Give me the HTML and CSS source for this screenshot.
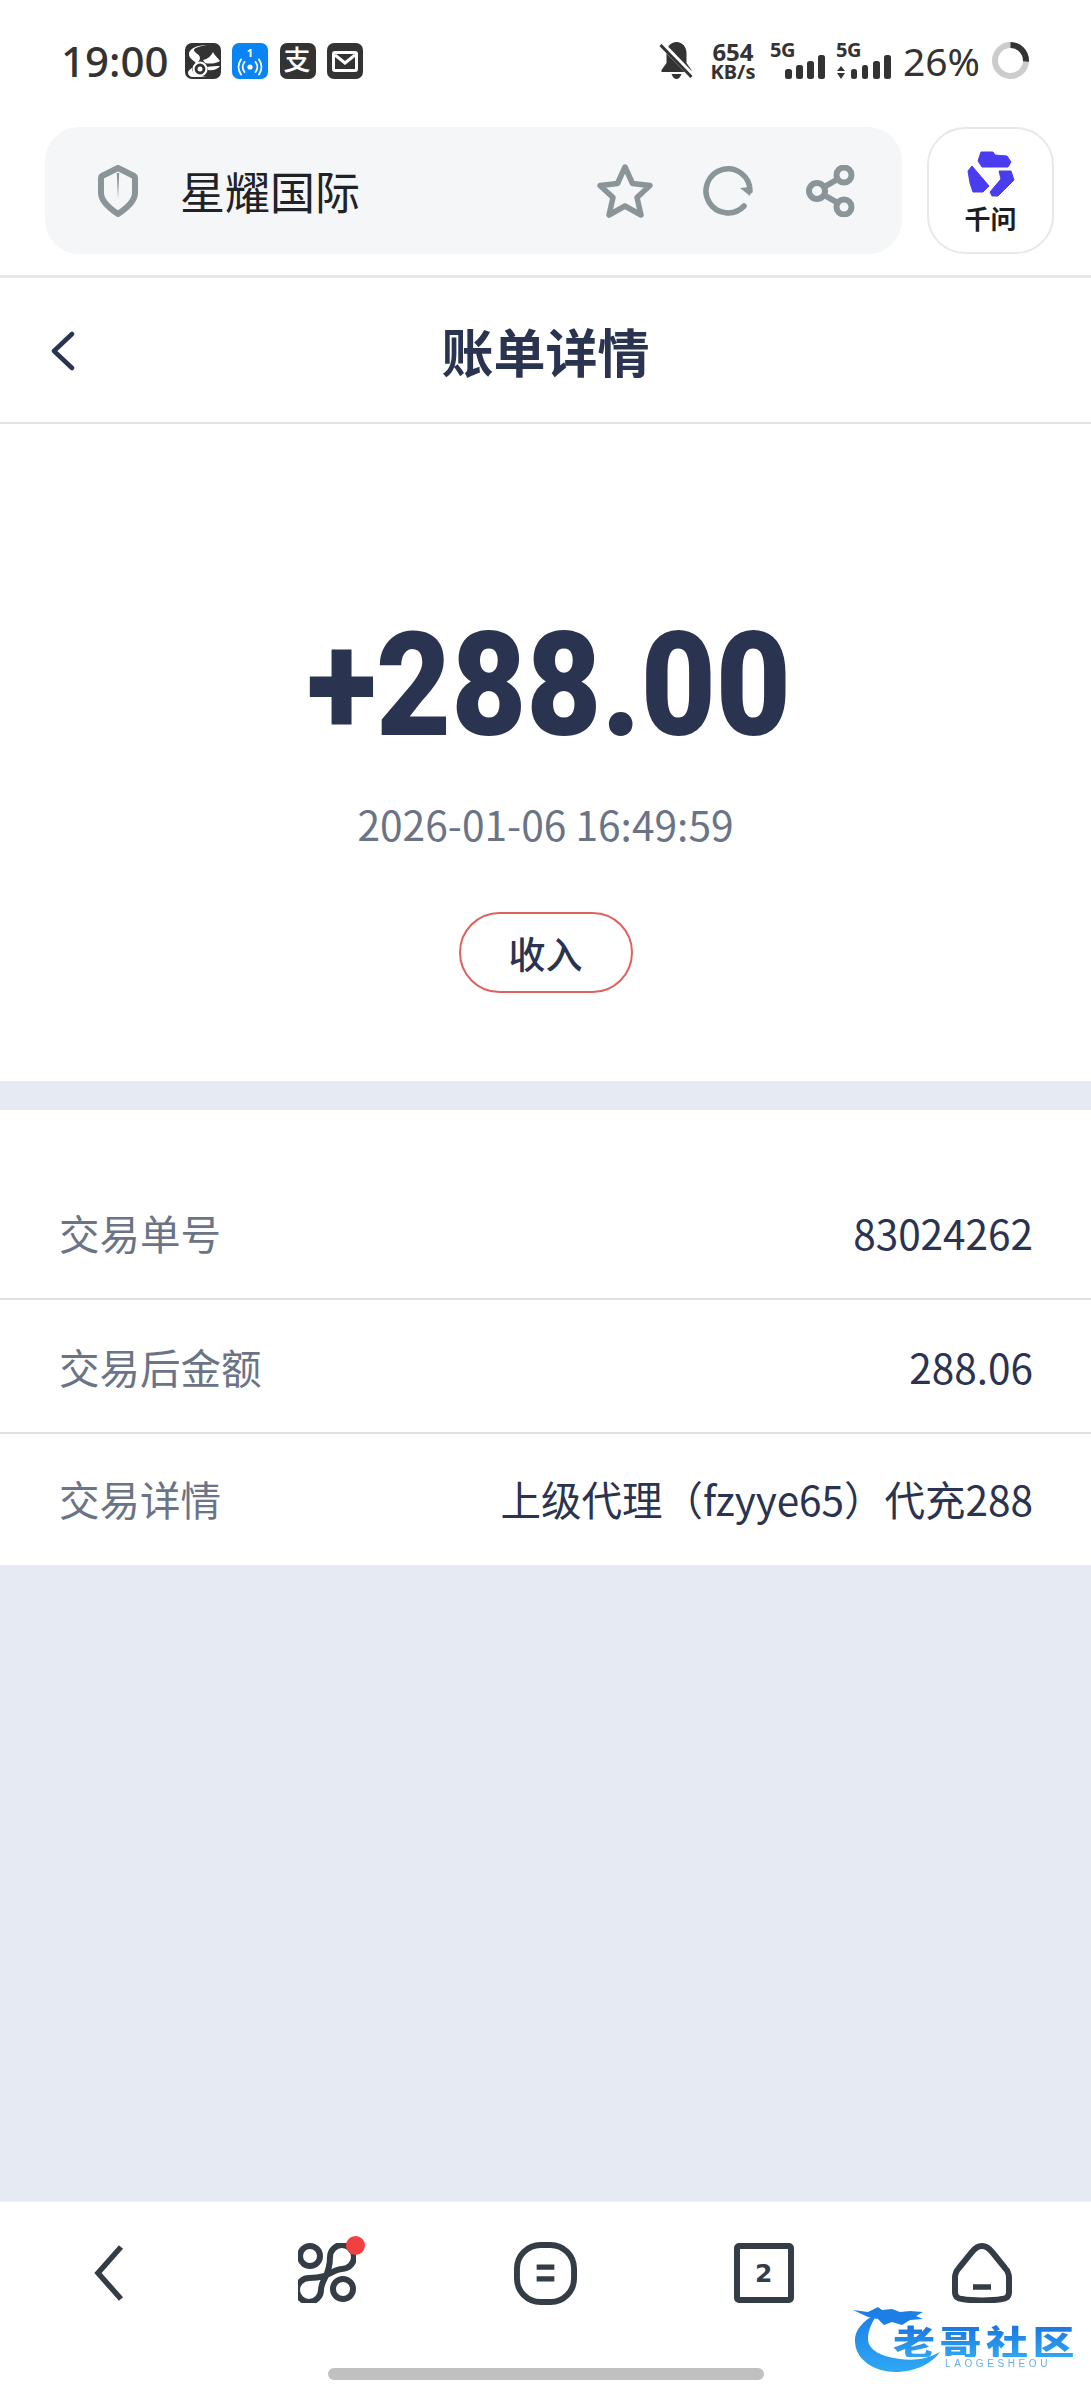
FILE: index.html
```html
<!DOCTYPE html>
<html lang="zh-CN">
<head>
<meta charset="utf-8">
<title>账单详情</title>
<link rel="stylesheet" href="styles.css">
</head>
<body>
<div class="screen">

  <header class="status">
    <div class="status-left">
      <span class="clock">19:00</span>
      <div class="notify-icons">
        <!-- UC browser squirrel -->
        <svg class="notify" viewBox="0 0 36 36"><rect width="36" height="36" rx="7" fill="#333"/><path d="M22 2C12 2 3 6 4 12c1 5 7 6 7 9-1 3-8 5-8 9 0 2 2 4 5 4h14C12 33 7 30 7 26c0-4 8-6 8-11 0-4-6-5-6-8 0-2 6-4 13-5z" fill="#fff"/><circle cx="15" cy="26" r="6.500" fill="none" stroke="#fff" stroke-width="2.200"/><circle cx="15" cy="26" r="2.500" fill="#fff"/><path d="M18 17c5-1 8-4 10-8 1 3 5 6 7 9-5 3-11 3-15 2z" fill="#fff"/><path d="M22 24c4-1 9-1 13-1-2 3-7 5-12 4z" fill="#fff"/></svg>
        <!-- hotspot with a count -->
        <svg class="notify" viewBox="0 0 36 36"><rect width="36" height="36" rx="7" fill="#0a84f5"/><text class="hotspot-count" x="18" y="14" text-anchor="middle">1</text><circle cx="18" cy="24" r="2.600" fill="#fff"/><path d="M12.500 19a8 8 0 0 0 0 10M23.500 19a8 8 0 0 1 0 10M9 16.500a13 13 0 0 0 0 15M27 16.500a13 13 0 0 1 0 15" fill="none" stroke="#fff" stroke-width="1.900" stroke-linecap="round"/></svg>
        <!-- Alipay mark -->
        <svg class="notify" viewBox="0 0 36 36"><rect width="36" height="36" rx="7" fill="#333"/><text class="alipay-mark" x="17" y="27" text-anchor="middle">支</text></svg>
        <!-- mail -->
        <svg class="notify" viewBox="0 0 36 36"><rect width="36" height="36" rx="7" fill="#333"/><rect x="6.500" y="9.500" width="23" height="18" rx="1.500" fill="none" stroke="#fff" stroke-width="3"/><path d="M8 12l10 8 10-8" fill="none" stroke="#fff" stroke-width="3"/></svg>
      </div>
    </div>
    <div class="status-right">
      <svg class="bell" viewBox="0 0 34 37"><path d="M17 0c6 0 10 5 10 11v10l5 7v2H2v-2l5-7V11C7 5 11 0 17 0z" fill="#333"/><path d="M12 32h10c-1 3-3 5-5 5s-4-2-5-5z" fill="#333"/><path d="M2 2l30 31" stroke="#fff" stroke-width="6"/><path d="M1 3l31 32" stroke="#333" stroke-width="3"/></svg>
      <div class="netspeed"><span class="net-value">654</span><span class="net-unit">KB/s</span></div>
      <svg class="signal" viewBox="0 0 55 37"><text class="signal-tag" x="0" y="15">5G</text><rect x="15" y="27" width="7" height="10" rx="2.500"/><rect x="26" y="23" width="7" height="14" rx="2.500"/><rect x="37" y="19" width="7" height="18" rx="2.500"/><rect x="48" y="13" width="7" height="24" rx="2.500"/></svg>
      <svg class="signal" viewBox="0 0 55 37"><text class="signal-tag" x="0" y="15">5G</text><path d="M5 24l4 5H1zM1 31h8l-4 6z"/><rect x="15" y="27" width="6" height="10" rx="2.500"/><rect x="26" y="23" width="6" height="14" rx="2.500"/><rect x="37" y="19" width="7" height="18" rx="2.500"/><rect x="48" y="13" width="7" height="24" rx="2.500"/></svg>
      <span class="battery-level">26%</span>
      <svg class="battery-ring" viewBox="0 0 37 37"><circle cx="18.500" cy="18.500" r="15.500" fill="none" stroke="#ccc" stroke-width="6"/><circle cx="18.500" cy="18.500" r="15.500" fill="none" stroke="#333" stroke-width="6" stroke-dasharray="25.300 97.400" transform="rotate(-90 18.500 18.500)"/></svg>
    </div>
  </header>

  <div class="toolbar">
    <div class="address">
      <svg class="shield" viewBox="0 0 40 52"><path d="M20 3l16 8c1 .5 1 1 1 2v15c0 8-8 15-17 21C11 43 3 36 3 28V13c0-1 0-1.500 1-2z" fill="none" stroke="#8a9499" stroke-width="6" stroke-linejoin="round"/><path d="M18.800 8h2.400L20 34z" fill="#8a9499"/></svg>
      <span class="site-name">星耀国际</span>
      <div class="address-actions">
        <svg class="star" viewBox="0 0 56 54"><path d="M28 3l7.500 16.500L53 21.500 40 33.500 44 51 28 42 12 51l4-17.500L3 21.500l17.500-2z" fill="none" stroke="#8a9499" stroke-width="5.500" stroke-linejoin="round"/></svg>
        <svg class="reload" viewBox="0 0 50 50"><path d="M47 25A22 22 0 1 0 41 40" fill="none" stroke="#8a9499" stroke-width="5.500" stroke-linecap="round"/><path d="M37 22l10 8 1-9z" fill="#8a9499"/></svg>
        <svg class="share" viewBox="0 0 49 52"><g fill="none" stroke="#8a9499" stroke-width="6"><circle cx="11" cy="26" r="8"/><circle cx="38" cy="10" r="7.500"/><circle cx="38" cy="42" r="7.500"/><path d="M18 22l14-8M18 30l14 8"/></g></svg>
      </div>
    </div>
    <div class="assistant">
      <svg class="assistant-logo" viewBox="0 0 48 47"><g fill="#4a3df0" stroke="#4a3df0" stroke-width="1" stroke-linejoin="round"><path d="M14 2h12l2 3 12 1 4 6-3 5H15l-4-6z"/><path d="M1 21l4-5 17 20-6 6H6l-3-9z"/><path d="M32 21h12l3 9-16 16h-6l-2-4 11-13z"/></g></svg>
      <span class="assistant-name">千问</span>
    </div>
  </div>

  <nav class="titlebar">
    <svg class="titlebar-back" viewBox="0 0 24 40"><path d="M21 3L3 20l18 17" fill="none" stroke="#2a3350" stroke-width="4.500" stroke-linecap="round" stroke-linejoin="round"/></svg>
    <h1 class="titlebar-title">账单详情</h1>
  </nav>

  <section class="summary">
    <div class="amount">+288.00</div>
    <div class="timestamp">2026-01-06 16:49:59</div>
    <div class="kind-pill">收入</div>
  </section>

  <section class="details">
    <div class="detail-row"><span class="detail-label">交易单号</span><span class="detail-value">83024262</span></div>
    <div class="detail-row"><span class="detail-label">交易后金额</span><span class="detail-value">288.06</span></div>
    <div class="detail-row"><span class="detail-label">交易详情</span><span class="detail-value">上级代理（fzyye65）代充288</span></div>
  </section>

  <div class="filler"></div>

  <footer class="tabbar">
    <div class="tabs">
      <svg class="tab-back" viewBox="0 0 30 58"><path d="M27 3L4 29l23 26" fill="none" stroke="#343d45" stroke-width="5.500" stroke-linejoin="miter"/></svg>
      <div class="tab-cluster">
        <svg class="cluster-icon" viewBox="0 0 58 60"><g fill="none" stroke="#343d45" stroke-width="6"><circle cx="12" cy="13" r="10"/><circle cx="45" cy="46" r="10"/><path d="M23 47C23 36 32 34 32 14A12 12 0 1 1 44 26C34 26 33 35 11 35A12 12 0 1 0 23 47Z"/></g></svg>
        <span class="cluster-dot"></span>
      </div>
      <svg class="tab-menu" viewBox="0 0 64 64"><rect x="3" y="3" width="58" height="58" rx="24" fill="none" stroke="#343d45" stroke-width="6"/><path d="M23 25.500h18M23 37.500h18" stroke="#343d45" stroke-width="5.500"/></svg>
      <div class="tab-count">2</div>
      <svg class="tab-home" viewBox="0 0 60 60"><path d="M30 3c-4 0-7 2-10 6L7 25c-3 3-4 6-4 10v14c0 5 3 7 7 7 10 2 30 2 40 0 4 0 7-2 7-7V35c0-4-1-7-4-10L40 9c-3-4-6-6-10-6z" fill="none" stroke="#343d45" stroke-width="6"/><path d="M21 44h18" stroke="#343d45" stroke-width="5.500"/></svg>
    </div>
    <div class="home-indicator"></div>
  </footer>

  <div class="watermark">
    <svg class="watermark-dragon" viewBox="0 0 110 70"><defs><linearGradient id="dragonFill" x1="0" y1="0" x2="0" y2="1"><stop offset="0" stop-color="#1c7fe6"/><stop offset="1" stop-color="#2fa8f4"/></linearGradient></defs><path d="M38 8C22 16 14 26 15 37 16 56 36 67 55 67 76 67 92 58 100 47 88 54 74 56 60 54 42 52 28 45 28 34 28 24 33 16 38 8Z" fill="url(#dragonFill)"/><path d="M13 5L28 7 38 2 42 5 52 4 60 7 70 6 83 7 76 11 83 14 70 15 62 20 52 17 44 20 38 14 28 12Z" fill="#1c7fe6"/></svg>
    <span class="watermark-name">老哥社区</span>
    <span class="watermark-latin">LAOGESHEOU</span>
  </div>
</div>
</body>
</html>
```

FILE: styles.css
```css
* { box-sizing: border-box; }

html, body { margin: 0; padding: 0; }

body {
  background: #fff;
  font-family: "Noto Sans CJK SC", "Noto Sans", sans-serif;
}

.screen {
  position: relative;
  width: 1091px;
  height: 2400px;
  display: flex;
  flex-direction: column;
  background: #e6eaf3;
  overflow: hidden;
}

/* system status bar */
.status {
  height: 127px;
  padding: 42px 62px 0 61px;
  display: flex;
  justify-content: space-between;
  align-items: flex-start;
  background: #fff;
  color: #333;
}

.status-left { display: flex; align-items: center; height: 37px; gap: 16px; }

.clock {
  font-family: "Noto Sans", sans-serif;
  font-size: 42px;
  font-weight: 500;
  line-height: 37px;
}

.notify-icons { display: flex; gap: 11.500px; }
.notify { width: 36px; height: 36px; display: block; overflow: visible; }

.hotspot-count { font: 700 11px "Noto Sans", sans-serif; fill: #fff; }
.alipay-mark { font: 500 27px "Noto Sans CJK SC", sans-serif; fill: #fff; }

.status-right { display: flex; align-items: center; height: 37px; }

.bell { width: 35px; height: 37px; display: block; }

.netspeed {
  margin-left: 17px;
  width: 44px;
  display: flex;
  flex-direction: column;
  align-items: center;
  font-family: "Noto Sans", sans-serif;
  font-weight: 700;
}

.net-value { font-size: 24px; line-height: 22px; }
.net-unit { font-size: 20px; line-height: 17px; white-space: nowrap; }

.signal { width: 55px; height: 37px; display: block; margin-left: 15px; fill: #333; overflow: visible; }
.signal + .signal { margin-left: 11px; }
.signal-tag { font: 700 20px "Noto Sans", sans-serif; letter-spacing: -0.5px; }

.battery-level {
  margin-left: 12px;
  font-family: "Noto Sans", sans-serif;
  font-size: 39px;
  line-height: 37px;
  white-space: nowrap;
}

.battery-ring { width: 37px; height: 37px; display: block; margin-left: 12px; }

/* browser address row */
.toolbar {
  height: 151px;
  padding: 0 37px 0 45px;
  display: flex;
  gap: 25px;
  align-items: flex-start;
  background: #fff;
  border-bottom: 3px solid #e8e8e8;
}

.address {
  flex: 1;
  height: 127px;
  padding: 0 47px 0 53px;
  display: flex;
  align-items: center;
  background: #f4f6f8;
  border-radius: 34px;
}

.shield { width: 40px; height: 52px; display: block; }

.site-name {
  margin-left: 42px;
  font-size: 45px;
  line-height: 60px;
  color: #1f2328;
}

.address-actions { margin-left: auto; display: flex; align-items: center; }
.star { width: 56px; height: 54px; display: block; }
.reload { width: 50px; height: 50px; display: block; margin-left: 50px; }
.share { width: 49px; height: 52px; display: block; margin-left: 53px; }

.assistant {
  width: 127px;
  height: 127px;
  border: 2px solid #e8e8e8;
  border-radius: 38px;
  display: flex;
  flex-direction: column;
  align-items: center;
  padding-top: 21px;
}

.assistant-logo { width: 48px; height: 47px; display: block; }

.assistant-name {
  margin-top: 5px;
  font-size: 26px;
  line-height: 32px;
  font-weight: 700;
  color: #1d1d1f;
}

/* page title */
.titlebar {
  position: relative;
  height: 146px;
  padding-top: 2px;
  display: flex;
  align-items: center;
  justify-content: center;
  background: #fff;
  border-bottom: 2px solid #e2e2e2;
}

.titlebar-back { position: absolute; left: 51px; top: 53px; width: 24px; height: 40px; }

.titlebar-title {
  margin: 0;
  font-size: 52px;
  line-height: 70px;
  font-weight: 700;
  color: #2a3350;
}

/* amount block */
.summary {
  height: 657px;
  padding-top: 190px;
  display: flex;
  flex-direction: column;
  align-items: center;
  background: #fff;
}

.amount {
  margin-left: 7px;
  font-family: Roboto, sans-serif;
  font-size: 144px;
  line-height: 144px;
  font-weight: 900;
  color: #2a3350;
  transform: scaleX(0.9);
  white-space: nowrap;
}

.timestamp {
  margin-top: 41px;
  font-size: 40.700px;
  line-height: 50px;
  color: #6b7486;
  white-space: nowrap;
}

.kind-pill {
  margin-top: 63px;
  width: 174px;
  height: 81px;
  display: flex;
  align-items: center;
  justify-content: center;
  border: 2.500px solid #e0615c;
  border-radius: 41px;
  font-size: 37px;
  font-weight: 500;
  color: #2a3350;
}

/* transaction rows */
.details {
  margin-top: 29px;
  padding-top: 56px;
  background: #fff;
}

.detail-row {
  height: 134px;
  padding: 0 58px 0 59px;
  display: flex;
  align-items: center;
  justify-content: space-between;
  border-bottom: 2px solid #e0e0e0;
  font-size: 40.500px;
}

.detail-row:last-child { height: 131px; padding-bottom: 2px; border-bottom: 0; }

.detail-label { color: #6b7486; }
.detail-value { color: #2a3350; white-space: nowrap; }

.filler { flex: 1; }

/* bottom navigation */
.tabbar {
  height: 199px;
  padding-top: 39px;
  display: flex;
  flex-direction: column;
  align-items: center;
  background: #fff;
  border-top: 1px solid #eef0f4;
}

.tabs {
  width: 100%;
  height: 64px;
  display: grid;
  grid-template-columns: repeat(5, 1fr);
  align-items: center;
  justify-items: center;
}

.tab-back { width: 30px; height: 58px; display: block; }

.tab-cluster { position: relative; width: 58px; height: 60px; }
.cluster-icon { width: 58px; height: 60px; display: block; }

.cluster-dot {
  position: absolute;
  right: -9px;
  top: -7px;
  width: 19px;
  height: 19px;
  border-radius: 50%;
  background: #f04040;
}

.tab-menu { width: 63px; height: 63px; display: block; }

.tab-count {
  width: 60px;
  height: 60px;
  border: 6px solid #343d45;
  border-radius: 5px;
  display: flex;
  align-items: center;
  justify-content: center;
  font-family: "DejaVu Sans", sans-serif;
  font-size: 25px;
  font-weight: 700;
  color: #343d45;
}

.tab-home { width: 60px; height: 60px; display: block; }

.home-indicator {
  margin-top: 63px;
  width: 436px;
  height: 12px;
  border-radius: 6px;
  background: #c0c0c0;
}

/* community watermark stamped over the corner */
.watermark {
  position: absolute;
  left: 853px;
  top: 2305px;
  width: 222px;
  height: 70px;
  filter: blur(0.6px);
}

.watermark-dragon { position: absolute; left: -13px; top: 0; width: 110px; height: 70px; }

.watermark-name {
  position: absolute;
  left: 40px;
  top: 20px;
  font-size: 42px;
  line-height: 40px;
  font-weight: 900;
  letter-spacing: 4.500px;
  white-space: nowrap;
  transform: scaleY(0.8);
  transform-origin: left top;
  background: linear-gradient(#1b74de, #2fa6f3);
  -webkit-background-clip: text;
  background-clip: text;
  color: transparent;
}

.watermark-latin {
  position: absolute;
  left: 92px;
  top: 53px;
  font-family: "Liberation Sans", sans-serif;
  font-size: 10px;
  line-height: 12px;
  letter-spacing: 3.600px;
  color: #6aaeea;
  white-space: nowrap;
}
```
